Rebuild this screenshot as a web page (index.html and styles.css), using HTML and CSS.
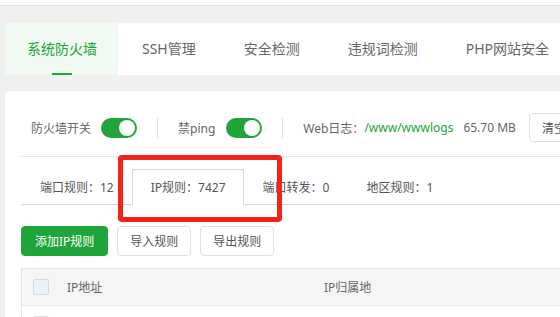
FILE: index.html
```html
<!DOCTYPE html>
<html lang="zh-CN">

<head>
    <meta charset="UTF-8">
    <meta name="viewport" content="width=device-width, initial-scale=1.0">
    <link rel="stylesheet" href="styles.css">
    <title>系统防火墙</title>
</head>

<body>

    <div class="topbar"></div>

    <div class="page">
        <div class="nav-card">
            <a class="nav-item active">系统防火墙</a>
            <a class="nav-item">SSH管理</a>
            <a class="nav-item">安全检测</a>
            <a class="nav-item">违规词检测</a>
            <a class="nav-item">PHP网站安全</a>
        </div>

        <div class="main-card">
            <div class="switch-row">
                <span class="label">防火墙开关</span>
                <span class="switch on"></span>
                <span class="sep"></span>
                <span class="label">禁ping</span>
                <span class="switch on small-gap"></span>
                <span class="sep"></span>
                <span class="label">Web日志：</span>
                <span class="path">/www/wwwlogs</span>
                <span class="size">65.70 MB</span>
                <button class="btn">清空日志</button>
            </div>

            <div class="sub-tabs">
                <span class="sub-tab">端口规则：12</span>
                <span class="sub-tab active">IP规则：7427</span>
                <span class="sub-tab">端口转发：0</span>
                <span class="sub-tab">地区规则：1</span>
            </div>

            <div class="actions">
                <button class="btn btn-green">添加IP规则</button>
                <button class="btn">导入规则</button>
                <button class="btn">导出规则</button>
            </div>

            <table class="rules">
                <thead>
                    <tr>
                        <th class="col-check"><span class="checkbox"></span></th>
                        <th class="col-ip">IP地址</th>
                        <th>IP归属地</th>
                    </tr>
                </thead>
                <tbody>
                    <tr>
                        <td class="col-check"><span class="checkbox"></span></td>
                        <td></td>
                        <td></td>
                    </tr>
                </tbody>
            </table>
        </div>

        <div class="mark"></div>
    </div>

</body>

</html>
```

FILE: styles.css
```css
body {
    margin: 0;
    background-color: #f0f0f0;
    font-family: "Noto Sans", "Noto Sans CJK SC", sans-serif;
    color: #666;
    overflow: hidden;
}

.topbar {
    height: 5px;
    background-color: #fff;
    border-bottom: 1px solid #e1e1e1;
}

.page {
    position: relative;
    padding: 17px 0 0 5px;
    width: 1200px;
}

.nav-card {
    display: flex;
    height: 52px;
    background-color: #fff;
    border-radius: 4px;
    overflow: hidden;
}

.nav-item {
    position: relative;
    padding: 0 24px;
    line-height: 52px;
    font-size: 14px;
    color: #666;
}

.nav-item.active {
    padding: 0 21px 0 22px;
    background-color: #f1f9f3;
    color: #20a53a;
}

.nav-item.active::after {
    content: "";
    position: absolute;
    left: 50%;
    bottom: 0;
    width: 20px;
    height: 2px;
    margin-left: -10px;
    background-color: #20a53a;
}

.main-card {
    margin-top: 16px;
    padding: 16px;
    background-color: #fff;
    border-radius: 4px 0 0 0;
    height: 200px;
}

.switch-row {
    display: flex;
    align-items: center;
    padding: 6px 0 14px 10px;
    border-bottom: 1px solid #e4e4ea;
    font-size: 12px;
}

.switch {
    position: relative;
    width: 36px;
    height: 20px;
    margin-left: 10px;
    border-radius: 10px;
    background-color: #ccc;
}

.switch.small-gap {
    margin-left: 11px;
}

.switch.on {
    background-color: #20a53a;
}

.switch::after {
    content: "";
    position: absolute;
    top: 2px;
    left: 2px;
    width: 16px;
    height: 16px;
    border-radius: 50%;
    background-color: #fff;
}

.switch.on::after {
    left: 18px;
}

.sep {
    width: 1px;
    height: 20px;
    margin: 0 20px;
    background-color: #e0e0e0;
}

.path {
    color: #20a53a;
}

.size {
    margin-left: 10px;
}

.switch-row .btn {
    height: 29px;
    margin-left: 13px;
}

.btn {
    height: 30px;
    padding: 0 12px;
    font-family: inherit;
    font-size: 12px;
    color: #555;
    background-color: #fff;
    border: 1px solid #dcdfe6;
    border-radius: 4px;
    cursor: pointer;
}

.btn-green {
    padding: 0 13px;
    color: #fff;
    background-color: #20a53a;
    border-color: #20a53a;
}

.sub-tabs {
    display: flex;
    margin-top: 12px;
    border-bottom: 1px solid #d4d4de;
    font-size: 12px;
}

.sub-tab {
    padding: 0 17px 0 18px;
    line-height: 35px;
    border: 1px solid transparent;
    border-bottom: none;
    margin-bottom: -1px;
    color: #555;
}

.sub-tab.active {
    background-color: #fff;
    border-color: #d4d4de;
}

.actions {
    display: flex;
    gap: 9px;
    margin-top: 21px;
}

.rules {
    width: 100%;
    margin-top: 12px;
    border-collapse: collapse;
    border: 1px solid #e4e4e4;
    font-size: 12px;
}

.rules th,
.rules td {
    height: 36px;
    padding: 0;
    text-align: left;
    font-weight: normal;
    color: #666;
    border-bottom: 1px solid #e8e8ee;
}

.rules th {
    background-color: #f5f5f5;
}

.col-check {
    width: 34px;
    padding-left: 11px !important;
}

.col-ip {
    width: 257px;
}

.checkbox {
    display: block;
    width: 14px;
    height: 14px;
    border: 1px solid #d5dbe6;
    border-radius: 2px;
    background-color: #edf2fa;
}

.mark {
    position: absolute;
    left: 118px;
    top: 149px;
    width: 164px;
    height: 67px;
    box-sizing: border-box;
    border: 5px solid #f5211b;
    border-radius: 4px;
}
```
